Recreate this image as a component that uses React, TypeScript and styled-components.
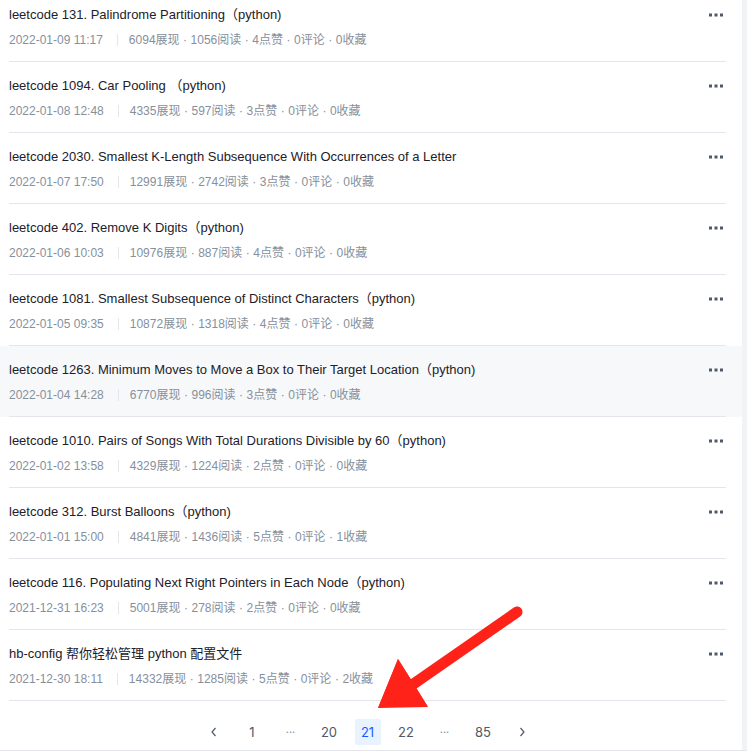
import React from "react";
import styled, { createGlobalStyle } from "styled-components";

const GlobalStyle = createGlobalStyle`
  html, body { margin: 0; padding: 0; background: #ffffff; }
  body { font-family: "Liberation Sans", "Noto Sans CJK SC", sans-serif; -webkit-font-smoothing: antialiased; }
  * { box-sizing: border-box; }
`;

const Page = styled.div`
  position: relative;
  width: 747px;
  height: 755px;
  overflow: hidden;
  background: #ffffff;
  display: flex;
  flex-direction: column;
`;

const Main = styled.div`
  display: grid;
  grid-template-columns: 742px 1fr;
  overflow: hidden;
`;

const Card = styled.div`
  background: #ffffff;
  margin-top: -9px;
`;

const ScrollStrip = styled.div`
  background: #f2f3f5;
`;

const Item = styled.div<{ $hover?: boolean }>`
  padding: 0 16px 0 9px;
  background: ${(p) => (p.$hover ? "#f7f8fa" : "transparent")};
`;

const ItemInner = styled.div`
  display: flex;
  align-items: flex-start;
  justify-content: space-between;
  padding: 13px 0 11px;
  border-bottom: 1px solid #e5e6eb;
`;

const Texts = styled.div`
  display: flex;
  flex-direction: column;
  gap: 4px;
`;

const Title = styled.div`
  font-size: 13px;
  line-height: 22px;
  color: #1d2129;
  white-space: nowrap;
`;

const Meta = styled.div`
  display: flex;
  align-items: center;
  font-size: 12px;
  line-height: 20px;
  color: #86909c;
  white-space: nowrap;
`;

const Sep = styled.span`
  display: inline-block;
  width: 1px;
  height: 12px;
  background: #e5e6eb;
  margin: 0 11px 0 14px;
`;

const Dot = styled.span`
  margin: 0 3.5px;
`;

const MoreBtn = styled.div`
  width: 18px;
  height: 22px;
  margin-right: 1px;
  display: flex;
  align-items: center;
  justify-content: center;
  color: #4e5969;
`;

const Pager = styled.div`
  display: flex;
  justify-content: center;
  align-items: center;
  gap: 12.5px;
  margin: 0 16px 0 9px;
  padding: 18px 0 5px;
`;

const PageItem = styled.div<{ $active?: boolean; $muted?: boolean }>`
  width: 26px;
  height: 26px;
  border-radius: 2px;
  display: flex;
  align-items: center;
  justify-content: center;
  font-family: Inter, "Liberation Sans", sans-serif;
  font-size: ${(p) => (p.$muted ? "11px" : "13px")};
  color: ${(p) => (p.$active ? "#165dff" : p.$muted ? "#86909c" : "#4e5969")};
  background: ${(p) => (p.$active ? "#e8f3ff" : "transparent")};
`;

const FooterLine = styled.div`
  border-top: 1px solid #e5e6eb;
  height: 5px;
`;

const ArrowLayer = styled.svg`
  position: absolute;
  left: 0;
  top: 0;
  pointer-events: none;
`;

type Row = { title: string; date: string; s: [string, string, string, string, string]; hover?: boolean };

const rows: Row[] = [
  { title: "leetcode 131. Palindrome Partitioning（python)", date: "2022-01-09 11:17", s: ["6094", "1056", "4", "0", "0"] },
  { title: "leetcode 1094. Car Pooling （python)", date: "2022-01-08 12:48", s: ["4335", "597", "3", "0", "0"] },
  { title: "leetcode 2030. Smallest K-Length Subsequence With Occurrences of a Letter", date: "2022-01-07 17:50", s: ["12991", "2742", "3", "0", "0"] },
  { title: "leetcode 402. Remove K Digits（python)", date: "2022-01-06 10:03", s: ["10976", "887", "4", "0", "0"] },
  { title: "leetcode 1081. Smallest Subsequence of Distinct Characters（python)", date: "2022-01-05 09:35", s: ["10872", "1318", "4", "0", "0"] },
  { title: "leetcode 1263. Minimum Moves to Move a Box to Their Target Location（python)", date: "2022-01-04 14:28", s: ["6770", "996", "3", "0", "0"], hover: true },
  { title: "leetcode 1010. Pairs of Songs With Total Durations Divisible by 60（python)", date: "2022-01-02 13:58", s: ["4329", "1224", "2", "0", "0"] },
  { title: "leetcode 312. Burst Balloons（python)", date: "2022-01-01 15:00", s: ["4841", "1436", "5", "0", "1"] },
  { title: "leetcode 116. Populating Next Right Pointers in Each Node（python)", date: "2021-12-31 16:23", s: ["5001", "278", "2", "0", "0"] },
  { title: "hb-config 帮你轻松管理 python 配置文件", date: "2021-12-30 18:11", s: ["14332", "1285", "5", "0", "2"] },
];

const labels = ["展现", "阅读", "点赞", "评论", "收藏"];

const Dots = () => (
  <svg width="16" height="4" viewBox="0 0 16 4">
    <rect x="1" y="0.5" width="3" height="3" fill="currentColor" />
    <rect x="6.5" y="0.5" width="3" height="3" fill="currentColor" />
    <rect x="12" y="0.5" width="3" height="3" fill="currentColor" />
  </svg>
);

const Chevron = ({ dir }: { dir: "left" | "right" }) => (
  <svg width="10" height="12" viewBox="0 0 10 12">
    <path
      d={dir === "left" ? "M6.5 2 L3 6 L6.5 10" : "M3.5 2 L7 6 L3.5 10"}
      fill="none"
      stroke="#4e5969"
      strokeWidth="1.2"
    />
  </svg>
);

export default function App() {
  return (
    <>
      <GlobalStyle />
      <Page>
        <Main>
          <Card>
            {rows.map((r, i) => (
              <Item key={i} $hover={r.hover}>
                <ItemInner>
                  <Texts>
                    <Title>{r.title}</Title>
                    <Meta>
                      <span>{r.date}</span>
                      <Sep />
                      {r.s.map((v, j) => (
                        <React.Fragment key={j}>
                          {j > 0 && <Dot>·</Dot>}
                          <span>
                            {v}
                            {labels[j]}
                          </span>
                        </React.Fragment>
                      ))}
                    </Meta>
                  </Texts>
                  <MoreBtn>
                    <Dots />
                  </MoreBtn>
                </ItemInner>
              </Item>
            ))}
            <Pager>
              <PageItem><Chevron dir="left" /></PageItem>
              <PageItem>1</PageItem>
              <PageItem $muted>···</PageItem>
              <PageItem>20</PageItem>
              <PageItem $active>21</PageItem>
              <PageItem>22</PageItem>
              <PageItem $muted>···</PageItem>
              <PageItem>85</PageItem>
              <PageItem><Chevron dir="right" /></PageItem>
            </Pager>
          </Card>
          <ScrollStrip />
        </Main>
        <FooterLine />
        <ArrowLayer width="747" height="755" viewBox="0 0 747 755">
          <line x1="517" y1="612" x2="412" y2="685" stroke="#fe2219" strokeWidth="11" strokeLinecap="round" />
          <polygon points="378,708 398,659 412,681 428,707 410,692" fill="#fe2219" />
          <polygon points="378,708 398,659 428,707" fill="#fe2219" />
        </ArrowLayer>
      </Page>
    </>
  );
}
